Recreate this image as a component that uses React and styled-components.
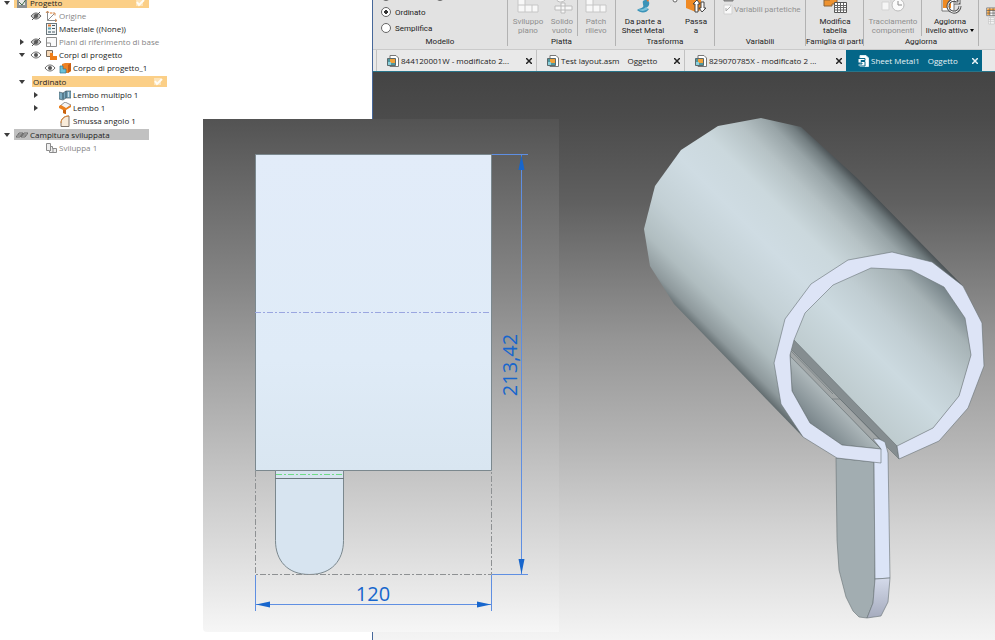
import React from "react";
import styled, { createGlobalStyle } from "styled-components";

const tree = [
  {
    id: "progetto",
    rows: [
      { level: 0, arrow: "down", bar: "#fbcf87", icon: "project", text: "Progetto", check: true },
      { level: 1, eye: "off", icon: "origin", text: "Origine", muted: true },
      { level: 1, eye: "none", icon: "material", text: "Materiale ((None))" },
      { level: 1, arrow: "right", eye: "off", icon: "plane", text: "Piani di riferimento di base", muted: true },
      { level: 1, arrow: "down", eye: "on", icon: "bodies", text: "Corpi di progetto" },
      { level: 2, eye: "on", icon: "body", text: "Corpo di progetto_1" },
    ],
  },
  {
    id: "ordinato",
    rows: [
      { level: 1, arrow: "down", bar: "#fbcf87", text: "Ordinato", check: true },
      { level: 2, arrow: "right", eye: "none", icon: "contour", text: "Lembo multiplo 1" },
      { level: 2, arrow: "right", eye: "none", icon: "flange", text: "Lembo 1" },
      { level: 2, eye: "none", icon: "corner", text: "Smussa angolo 1" },
    ],
  },
  {
    id: "campitura",
    rows: [
      { level: 0, arrow: "down", bar: "#c1c1c1", icon: "pattern", text: "Campitura sviluppata" },
      { level: 1, eye: "none", icon: "flat", text: "Sviluppa 1", muted: true },
    ],
  },
];

const tabs = [
  { title: "844120001W - modificato 2...", width: 160 },
  { title: "Test layout.asm", status: "Oggetto", width: 148 },
  { title: "829070785X - modificato 2 ...", width: 162 },
  { title: "Sheet Metal1", status: "Oggetto", width: 136, active: true },
];

const icons = {
  project: (
    <>
      <rect x="1" y="1" width="10" height="10" fill="#8b8f91" />
      <path d="M3 3h6v5H3z" fill="#e8e8e8" />
      <path d="M3 5l3 3 5-7" stroke="#3f6b4a" fill="none" />
    </>
  ),
  origin: (
    <>
      <path d="M2.500 1v9.500H12M2.500 10.500l7-7" stroke="#8d8d8d" fill="none" />
      <path d="M1 3l1.500-2L4 3M10 9l2 1.500-2 1.500M7.500 3h2.500v2.500" stroke="#d58a4e" fill="none" />
      <circle cx="6" cy="3" r="1" fill="#e8a66e" />
    </>
  ),
  material: (
    <>
      <rect x="1.5" y=".5" width="10" height="11" fill="#f2f5f6" stroke="#6c777c" />
      <path d="M7 2.500h3M7 5.500h3M7 9h3" stroke="#4a5a64" />
      <rect x="3" y="1.500" width="3" height="2" fill="#dd7b32" />
      <rect x="3" y="4.500" width="3" height="2" fill="#55a4b8" />
      <rect x="3" y="8" width="3" height="2" fill="#8a9ba4" />
    </>
  ),
  plane: <path d="M1.500 1.500h10v9h-10zM1.500 10.500h4V7h-4M5.500 7v3" stroke="#8d8d8d" fill="#fafafa" />,
  bodies: (
    <>
      <path d="M1.500 1.500h6v6h-6z" fill="#f6d9b8" stroke="#776a5c" />
      <path d="M5 4h3v3h4v4H5z" fill="#ee7d16" />
    </>
  ),
  body: (
    <>
      <path d="M3 2l3-1h6v8l-3 2H3z" fill="#ee8224" />
      <path d="M9 3l3-2v8l-3 2z" fill="#c95f13" />
      <path d="M1 4h3v3h3v4H1z" fill="#6cc2d8" stroke="#34758c" strokeWidth=".7" />
    </>
  ),
  contour: (
    <>
      <path d="M0 3l4 1 3-2h5v7H7l-3 2-4-1z" fill="#7aa9bf" stroke="#485b65" strokeWidth=".7" />
      <path d="M4 4v6M7 2v7" stroke="#35505e" />
      <path d="M9.500 3v5" stroke="#c7dce5" />
    </>
  ),
  flange: (
    <>
      <path d="M1 4l5-4 6 3-5 4z" fill="#f4f4f4" stroke="#666" strokeWidth=".7" />
      <path d="M0 4l2-1 5 3 5-3v2L7 8v4l-3-1V8L0 6z" fill="#ea801e" />
      <path d="M4 8l3 0v4l-3-1z" fill="#c9630f" />
    </>
  ),
  corner: (
    <>
      <path d="M2 11.500V8c0-4 3-7 8-7v10.500z" fill="#f9ebd9" stroke="#81756b" />
      <path d="M2 8c0-4 3-7 8-7" fill="none" stroke="#e58a35" />
    </>
  ),
  pattern: (
    <>
      <path d="M0 8l3-4h4L4 8zM5 8l3-4h4L9 8z" fill="none" stroke="#686868" />
      <path d="M2 6h8" stroke="#686868" />
    </>
  ),
  flat: <path d="M1.500 1.500h4v3h2v2h4v4h-7v-2h-3zM5.500 4v5M8 6.500v4" stroke="#8b8b8b" fill="#eee" />,
};

function Eye({ off }) {
  return (
    <svg width="12" height="10" viewBox="0 0 12 10" aria-hidden="true">
      <path d="M1 5c3-4 7-4 10 0-3 4-7 4-10 0z" fill={off ? "#bdbdbd" : "#fff"} stroke="#666" />
      <circle cx="6" cy="5" r="2" fill="#555" />
      {off && <path d="M2 9l8-8" stroke="#555" />}
    </svg>
  );
}

function TreeRow({ row }) {
  const content = (
    <>
      {row.icon && (
        <Slot $w={15}>
          <svg width="12" height="12" viewBox="0 0 12 12" aria-hidden="true">{icons[row.icon]}</svg>
        </Slot>
      )}
      <RowText $muted={row.muted}>{row.text}</RowText>
      {row.check && (
        <Check width="10" height="10" viewBox="0 0 10 10" aria-hidden="true">
          <path d="M1 1h7v7H1z" fill="#fde3b7" />
          <path d="M2 4l2 3 5-5" fill="none" stroke="#fffdf6" strokeWidth="2" />
        </Check>
      )}
    </>
  );

  return (
    <Row $level={row.level}>
      <Slot $w={14}>
        {row.arrow && (
          <svg width="6" height="6" viewBox="0 0 6 6" aria-hidden="true">
            <path d={row.arrow === "down" ? "M0 1h6L3 5z" : "M1 0v6l4-3z"} fill="#3d3d3d" />
          </svg>
        )}
      </Slot>
      {row.eye && <Slot $w={14}>{row.eye !== "none" && <Eye off={row.eye === "off"} />}</Slot>}
      {row.bar ? <Bar $color={row.bar} $inset={!row.icon}>{content}</Bar> : content}
    </Row>
  );
}

function Tool({ lines, width, disabled, menu, children }) {
  return (
    <ToolButton $w={width} disabled={disabled}>
      <svg width="26" height="16" viewBox="0 0 26 16" aria-hidden="true">{children}</svg>
      <ToolText>
        <span>{lines[0]}</span>
        <span>
          {lines[1]}
          {menu && <Caret width="4" height="3" viewBox="0 0 4 3" aria-hidden="true"><path d="M0 0h4L2 3z" /></Caret>}
        </span>
      </ToolText>
    </ToolButton>
  );
}

function Ribbon() {
  return (
    <RibbonBar>
      <Group $w={135}>
        <Modes>
          <ModeRow>
            <input type="radio" name="mode" aria-label="Sincrono" />
            <input type="radio" name="mode" aria-label="Transizione" />
          </ModeRow>
          <label><input type="radio" name="mode" defaultChecked />Ordinato</label>
          <label><input type="radio" name="mode" />Semplifica</label>
        </Modes>
        <GroupName>Modello</GroupName>
      </Group>
      <Group $w={108}>
        <Tools>
          <Tool lines={["Sviluppo", "piano"]} width={38} disabled>
            <path d="M3 0h7v7h13v7H3zM10 7v7M3 7h7M17 7v7" fill="#f8f8f8" stroke="#c6c6c6" />
          </Tool>
          <Tool lines={["Solido", "vuoto"]} width={30} disabled>
            <path d="M7 1c2 4 7 4 10 0" fill="#f8f8f8" stroke="#bcbcbc" />
            <path d="M12 5h4v3h7v4h-7v3h-4v-3H6V8h6zM12 8h4M12 12h4M12 8v4M16 8v4" fill="#f8f8f8" stroke="#bcbcbc" />
          </Tool>
          <Divider />
          <Tool lines={["Patch", "rilievo"]} width={36} disabled>
            <path d="M3 0h7v7h13v7H3zM10 7v7M3 7h7M17 7v7" fill="#f8f8f8" stroke="#c6c6c6" />
          </Tool>
        </Tools>
        <GroupName>Piatta</GroupName>
      </Group>
      <Group $w={99}>
        <Tools>
          <Tool lines={["Da parte a", "Sheet Metal"]} width={52}>
            <path d="M13 3c3-2 5-1 6 1 1 3-1 5-3 6l3 1c-3 5-9 4-12 1 2-2 4-1 6-3 1-2-1-4 0-6z" fill="#3b93b8" />
            <path d="M8 11c3 1 6 0 8-2l2 2c-3 2-7 3-10 0z" fill="#7cc3dc" />
            <path d="M15 0h5l-2 4z" fill="#ed7a2e" />
          </Tool>
          <Small width="10" height="36" viewBox="0 0 10 36" aria-hidden="true">
            <circle cx="6" cy="0" r="2" fill="#fff" stroke="#666" />
          </Small>
          <Tool lines={["Passa", "a"]} width={34}>
            <path d="M3 0h15v12l-5 2-10-4z" fill="#f08a24" />
            <path d="M12 14V6h-2l4-4 3 4h-2v8zM18 4h3v6h2l-4 4-3-4h2z" fill="#fff" stroke="#444" />
          </Tool>
        </Tools>
        <GroupName>Trasforma</GroupName>
      </Group>
      <Group $w={91}>
        <Variables>
          <svg width="12" height="16" viewBox="0 0 12 16" aria-hidden="true">
            <path d="M2 0h9v1H2z" fill="#bbb" stroke="#777" />
            <path d="M2 5h8v9H2z" fill="#f9f9f9" stroke="#d2d2d2" />
            <path d="M4 11l4-4M4 8v3M8 6h1" stroke="#aaa" />
          </svg>
          <span>Variabili partetiche</span>
        </Variables>
        <GroupName>Variabili</GroupName>
      </Group>
      <Group $w={58}>
        <Tools>
          <Tool lines={["Modifica", "tabella"]} width={56}>
            <path d="M2 2h6V0h7v6h-5v2H2z" fill="#ee922f" stroke="#8c6237" />
            <path d="M12.500 4.500h12v10h-12z" fill="#fff" stroke="#555" />
            <path d="M12 7.500h12M12 9.500h12M12 12h12M15.500 5v10M18.500 5v10M21.500 5v10" stroke="#666" />
          </Tool>
        </Tools>
        <GroupName>Famiglia di parti</GroupName>
      </Group>
      <Group $w={115}>
        <Tools>
          <Tool lines={["Tracciamento", "componenti"]} width={56} disabled>
            <path d="M2 4h7v8H2zM11 0v5" fill="#f6f6f6" stroke="#d3d3d3" />
            <circle cx="18" cy="7" r="6" fill="#fbfbfb" stroke="#bcbcbc" />
            <path d="M18 3v4h4" fill="none" stroke="#8c8c8c" />
          </Tool>
          <Divider />
          <Tool lines={["Aggiorna", "livello attivo"]} width={56} menu>
            <path d="M5 0h12v13H5z" fill="#fff" stroke="#777" />
            <path d="M6 1h8v9H6z" fill="#ef8a23" />
            <path d="M23 8a6 6 0 1 1-3-5M22 0v5h-5" fill="none" stroke="#555" strokeWidth="3" />
            <path d="M23 8a6 6 0 1 1-3-5M22 0v5h-5" fill="none" stroke="#fff" />
          </Tool>
        </Tools>
        <GroupName>Aggiorna</GroupName>
      </Group>
      <More width="14" height="30" viewBox="0 0 14 30" aria-hidden="true">
        <path d="M1 4h13v12H1z" fill="#fff" stroke="#555" />
        <path d="M2 5h4v10H2zM6 5h8v3H6z" fill="#f3a23f" />
        <path d="M1 8h13M1 12h13M6 4v12M11 4v12" stroke="#555" />
        <path d="M4 19h9v10H4zM4 22h9M4 25h9M7 19v10" fill="#f5f5f5" stroke="#c4c4c4" />
      </More>
    </RibbonBar>
  );
}

function DocumentTabs() {
  return (
    <TabBar>
      {tabs.map((tab) => (
        <Tab key={tab.title} $w={tab.width} $active={tab.active}>
          <svg width="12" height="12" viewBox="0 0 12 12" aria-hidden="true">
            <path d="M3 .5h6l2.500 2.500v8.500H3z" fill="#fff" stroke={tab.active ? "#dceaf0" : "#777"} />
            {tab.active ? (
              <path d="M1 3.500h7v2H4v1h4V11H1V9h4V8H1z" fill="#fff" stroke="#046688" />
            ) : (
              <>
                <path d="M.5 3.500h8v7h-8z" fill="#4f97a0" stroke="#5c6a6c" />
                <path d="M3 4h5v4H3z" fill="#f0a13a" />
                <path d="M1 7h3v3H1z" fill="#8cd0dc" />
              </>
            )}
          </svg>
          <span>{tab.title}</span>
          {tab.status && <Status>{tab.status}</Status>}
          <Close aria-label="Chiudi">
            <svg width="6" height="6" viewBox="0 0 6 6" aria-hidden="true">
              <path d="M0 0l6 6M6 0L0 6" stroke="currentColor" strokeWidth="1.500" />
            </svg>
          </Close>
        </Tab>
      ))}
    </TabBar>
  );
}

function TubeModel() {
  return (
    <Model viewBox="373 72 622 568" role="img" aria-label="Sheet Metal1">
      <defs>
        <linearGradient id="outer" gradientUnits="userSpaceOnUse" x1="673" y1="307" x2="829" y2="151">
          <stop offset="0" stopColor="#5f696c" />
          <stop offset=".05" stopColor="#8e999c" />
          <stop offset=".15" stopColor="#b0bdc0" />
          <stop offset=".3" stopColor="#c3d0d5" />
          <stop offset=".5" stopColor="#cfdce3" />
          <stop offset=".66" stopColor="#cbd8dd" />
          <stop offset=".8" stopColor="#b6c2c5" />
          <stop offset=".9" stopColor="#98a4a7" />
          <stop offset=".96" stopColor="#727d80" />
          <stop offset="1" stopColor="#495053" />
        </linearGradient>
        <linearGradient id="inner" gradientUnits="userSpaceOnUse" x1="840" y1="400" x2="948" y2="292">
          <stop offset="0" stopColor="#bcc9cc" />
          <stop offset=".38" stopColor="#ccdae0" />
          <stop offset=".6" stopColor="#c0cdd2" />
          <stop offset=".85" stopColor="#a6b2b5" />
          <stop offset="1" stopColor="#78858a" />
        </linearGradient>
        <linearGradient id="floor" gradientUnits="userSpaceOnUse" x1="811" y1="424" x2="835" y2="400">
          <stop offset="0" stopColor="#79858a" />
          <stop offset="1" stopColor="#b0babd" />
        </linearGradient>
        <linearGradient id="tip" x1="0" y1="0" x2="0" y2="1">
          <stop offset="0" stopColor="#d4daea" />
          <stop offset="1" stopColor="#a5abbd" />
        </linearGradient>
      </defs>
      <path d="M801 127L761 118 718 126 681 150 655 186 644 229 650 266 674 304 803 437 900 400 963 286 857 178z" fill="url(#outer)" />
      <path d="M871 268L911 270 944 287 965 318 971 355 959 396 933 428 897 446 794 340 805 313 833 285z" fill="url(#inner)" />
      <g stroke="#667074" strokeWidth=".6" strokeLinejoin="round">
        <path d="M790 355L881 449 842 445 810 423 792 391z" fill="url(#floor)" />
        <path d="M794 340L897 446 899 459 886 446 790 348z" fill="#858d90" />
        <path d="M790 348L886 446 881 449 790 356z" fill="#a1a6a7" />
        <path d="M791 351L833 394M832 399h8L881 440" fill="none" />
        <path d="M836 458L837 540 839 570 846 597 853 611 859 617 867 618 873 603 875 579 874 462z" fill="#a2adb1" />
        <path d="M873 439h6l6 3 3 11 2 125-15 1-1-117 7-13z" fill="#dbe4f7" />
        <path d="M875 579l15-1-2 24-7 14-14 2 6-15z" fill="url(#tip)" />
        <path
          d="M892 252L932 262 963 286 982 323 984 366 968 408 939 441 899 459 897 446 933 428 959 396 971 355 965 318 944 287 911 270 871 268 833 285 805 313 794 340 790 355 792 391 810 423 842 445 881 449V463L837 458 803 437 781 404 774 363 785 319 811 284 848 260z"
          fill="#dde4f6"
        />
      </g>
    </Model>
  );
}

function FlatDrawing() {
  return (
    <FlatPanel>
      <svg viewBox="203 119 356 513" role="img" aria-label="Sviluppo quotato">
        <defs>
          <linearGradient id="sheet" x1="0" y1="0" x2="0" y2="1">
            <stop offset="0" stopColor="#e2ecf9" />
            <stop offset=".65" stopColor="#dfebf7" />
            <stop offset="1" stopColor="#d9e6f1" />
          </linearGradient>
        </defs>
        <path d="M255.500 154.500h236v316h-236z" fill="url(#sheet)" stroke="#7b888e" />
        <path d="M255 312.500h236" stroke="#9aa6e0" strokeDasharray="6 2 2 2" />
        <path d="M275.500 470.500h68v70c0 20-12 34-34 34s-34-14-34-34z" fill="#d7e4f0" stroke="#7b888e" />
        <path d="M275 478.500h69" stroke="#6a777d" />
        <path d="M276 474.500h67" stroke="#6edc86" strokeDasharray="6 2 2 2" />
        <path d="M255.500 471v103.500h236V471" fill="none" stroke="#8e9193" strokeDasharray="6 2 2 2" />
        <path d="M492 154.500h36M492 574.500h36M521.500 155v419M255.500 575v36M491.500 575v36M256 604.500h235" stroke="#5f8fe2" fill="none" />
        <path d="M521.500 155l3 15h-6zM521.500 574l3-15h-6zM256 604.500l14-3v6zM491 604.500l-14-3v6z" fill="#1766cd" />
        <text x="373" y="601" textAnchor="middle">120</text>
        <text transform="translate(517 365) rotate(-90)" textAnchor="middle">213,42</text>
      </svg>
    </FlatPanel>
  );
}

function App() {
  return (
    <>
      <GlobalStyle />
      <Page>
        <Sidebar>
          {tree.map((section) => (
            <Section key={section.id}>
              {section.rows.map((row) => <TreeRow key={row.text} row={row} />)}
            </Section>
          ))}
        </Sidebar>
        <Main>
          <Ribbon />
          <DocumentTabs />
          <Viewport>
            <TubeModel />
          </Viewport>
        </Main>
        <FlatDrawing />
      </Page>
    </>
  );
}

export default App;

const GlobalStyle = createGlobalStyle`
  * {
    box-sizing: border-box;
  }
  body {
    margin: 0;
    background: #fff;
    color: #222;
    font-family: "Open Sans", "Noto Sans", sans-serif;
    font-size: 8px;
    overflow: hidden;
  }
  button {
    font: inherit;
    color: inherit;
    background: none;
    border: 0;
    padding: 0;
  }
`;
const Page = styled.div`
  position: relative;
  display: flex;
  height: 100vh;
  overflow: hidden;
`;
const Sidebar = styled.nav`
  flex: 0 0 372px;
  margin-top: -4px;
`;
const Section = styled.section`
  margin-bottom: 1px;
`;
const Row = styled.div`
  display: flex;
  align-items: center;
  height: 13px;
  padding-left: ${(props) => [0, 15, 29][props.$level]}px;
  white-space: nowrap;
`;
const Slot = styled.span`
  flex: 0 0 ${(props) => props.$w}px;
  display: grid;
  place-items: center;
`;
const RowText = styled.span`
  line-height: 13px;
  padding-left: 1px;
  color: ${(props) => (props.$muted ? "#858585" : "#222")};
`;
const Bar = styled.div`
  display: flex;
  align-items: center;
  width: 135px;
  height: 11px;
  margin-left: ${(props) => (props.$inset ? 3 : 0)}px;
  background: ${(props) => props.$color};
`;
const Check = styled.svg`
  margin-left: auto;
  margin-right: 4px;
`;
const Main = styled.main`
  flex: 1;
  min-width: 0;
  display: flex;
  flex-direction: column;
  border-left: 1px solid #47689a;
`;
const RibbonBar = styled.div`
  display: flex;
  height: 50px;
  overflow: hidden;
  font-family: Roboto, "Open Sans", sans-serif;
  background: #e2e2e2;
  border-bottom: 1px solid #cacaca;
`;
const Group = styled.div`
  flex: 0 0 ${(props) => props.$w}px;
  min-width: 0;
  height: 46px;
  display: flex;
  flex-direction: column;
  border-right: 1px solid #b2b2b2;
`;
const GroupName = styled.div`
  line-height: 11px;
  text-align: center;
  white-space: nowrap;
`;
const Tools = styled.div`
  flex: none;
  display: flex;
  align-items: flex-end;
  height: 36px;
  padding-left: 1px;
`;
const ToolButton = styled.button`
  flex: 0 0 ${(props) => props.$w}px;
  display: flex;
  flex-direction: column;
  align-items: center;
  gap: 3px;
  padding-bottom: 1px;
  line-height: 9px;
  white-space: nowrap;
  color: ${(props) => (props.disabled ? "#8f8f8f" : "#222")};
`;
const ToolText = styled.span`
  display: flex;
  flex-direction: column;
  align-items: center;

  > span {
    height: 9px;
  }
`;
const Caret = styled.svg`
  margin-left: 2px;
  vertical-align: middle;
`;
const Small = styled.svg`
  flex: none;
`;
const Divider = styled.div`
  width: 1px;
  height: 36px;
  background: #b2b2b2;
`;
const Modes = styled.div`
  flex: none;
  display: flex;
  flex-direction: column;
  justify-content: flex-end;
  height: 36px;
  padding-left: 8px;

  label {
    display: flex;
    align-items: center;
    gap: 4px;
    flex: 0 0 16px;
  }
  input {
    appearance: none;
    flex: 0 0 10px;
    width: 10px;
    height: 10px;
    margin: 0;
    border: 1px solid #666;
    border-radius: 50%;
    background: #fff;
  }
  input:checked {
    background: radial-gradient(#333 0 2px, #fff 2px);
  }
`;
const ModeRow = styled.div`
  display: flex;
  align-items: center;
  gap: 44px;
  flex: 0 0 16px;
`;
const Variables = styled.div`
  flex: none;
  display: flex;
  align-items: flex-start;
  height: 36px;
  padding-left: 7px;
  line-height: 20px;
  white-space: nowrap;
  color: #929292;
`;
const More = styled.svg`
  margin-left: 7px;
`;
const TabBar = styled.div`
  display: flex;
  height: 22px;
  padding-left: 3px;
  background: #e9e9e9;
  border-bottom: 1px solid #287489;
`;
const Tab = styled.div`
  flex: 0 0 ${(props) => props.$w}px;
  display: flex;
  align-items: center;
  gap: 2px;
  padding: 0 3px 0 10px;
  white-space: nowrap;
  border-left: 1px solid ${(props) => (props.$active ? "#046688" : "#c2c2c2")};
  color: ${(props) => (props.$active ? "#e8f3f7" : "#222")};
  background: ${(props) => (props.$active ? "#046688" : "transparent")};
`;
const Status = styled.span`
  margin-left: 6px;
`;
const Close = styled.button`
  display: grid;
  place-items: center;
  margin-left: auto;
  width: 8px;
  height: 12px;
`;
const Viewport = styled.div`
  flex: 1;
  min-height: 0;
  background: linear-gradient(#444 0%, #4b4b4b 8%, #606060 23%, #959595 47%, #b4b4b4 65%, #d2d2d2 80%, #f4f4f4 100%);
`;
const Model = styled.svg`
  display: block;
  width: 100%;
  height: 100%;
`;
const FlatPanel = styled.div`
  position: absolute;
  left: 203px;
  top: 119px;
  width: 356px;
  border-radius: 0 0 0 4px;
  background: linear-gradient(#535353 0%, #626262 9%, #858585 32%, #a5a5a5 50%, #c6c6c6 70%, #dfdfdf 86%, #f6f6f6 100%);

  svg {
    display: block;
    width: 100%;
  }
  text {
    font-size: 20px;
    fill: #1766cd;
  }
`;
